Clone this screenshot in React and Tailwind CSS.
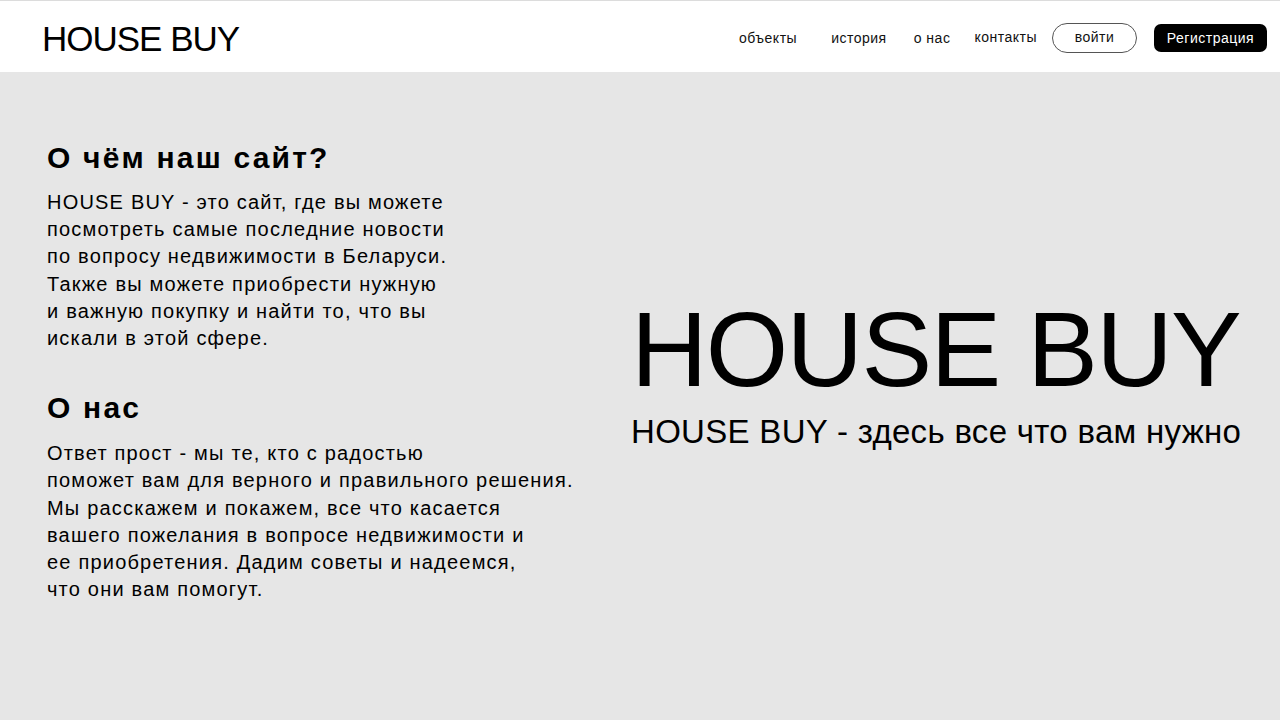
import React from "react";

export default function App() {
  return (
    <div className="flex h-[720px] w-[1280px] flex-col bg-[#e6e6e6] text-black [font-family:'Liberation_Sans',Arial,sans-serif]">
      {/* шапка */}
      <header className="flex h-[72px] items-center justify-between border-t border-[#dcdcdc] bg-white pl-[42px] pr-[13px] pt-[3px]">
        <div className="text-[35px] leading-none tracking-[-1px]">HOUSE BUY</div>
        <nav className="flex items-center text-[14px] tracking-[0.5px] text-[#111]">
          <a className="mr-[34px]">объекты</a>
          <a className="mr-[27px]">история</a>
          <a className="mr-[24px]">о нас</a>
          <a className="mr-[15px] -translate-y-[1px]">контакты</a>
          <button className="mr-[17px] h-[30px] w-[85px] rounded-full border border-[#555] pb-[2px] text-[14px]">
            войти
          </button>
          <button className="h-[28px] w-[113px] rounded-[7px] bg-black text-[14px] text-white">
            Регистрация
          </button>
        </nav>
      </header>

      {/* контент */}
      <main className="flex flex-1">
        <section className="w-[590px] pl-[47px] pt-[68px]">
          <h2 className="text-[30px] font-bold leading-[36px] tracking-[2.2px]">О чём наш сайт?</h2>
          <p className="mt-[13px] text-[20px] leading-[27.2px] tracking-[1.2px]">
            HOUSE BUY - это сайт, где вы можете
            <br />
            посмотреть самые последние новости
            <br />
            по вопросу недвижимости в Беларуси.
            <br />
            Также вы можете приобрести нужную
            <br />
            и важную покупку и найти то, что вы
            <br />
            искали в этой сфере.
          </p>

          <h2 className="mt-[38px] text-[30px] font-bold leading-[36px] tracking-[2.2px]">О нас</h2>
          <p className="mt-[14px] text-[20px] leading-[27.2px] tracking-[1.2px]">
            Ответ прост - мы те, кто с радостью
            <br />
            поможет вам для верного и правильного решения.
            <br />
            Мы расскажем и покажем, все что касается
            <br />
            вашего пожелания в вопросе недвижимости и
            <br />
            ее приобретения. Дадим советы и надеемся,
            <br />
            что они вам помогут.
          </p>
        </section>

        <section className="flex flex-1 flex-col items-start pl-[41px] pt-[221px]">
          <div className="text-[106px] leading-[112px] tracking-[-1.7px]">HOUSE BUY</div>
          <div className="mt-[7px] text-[33px] leading-[40px] tracking-[0.3px]">
            HOUSE BUY - здесь все что вам нужно
          </div>
        </section>
      </main>
    </div>
  );
}
